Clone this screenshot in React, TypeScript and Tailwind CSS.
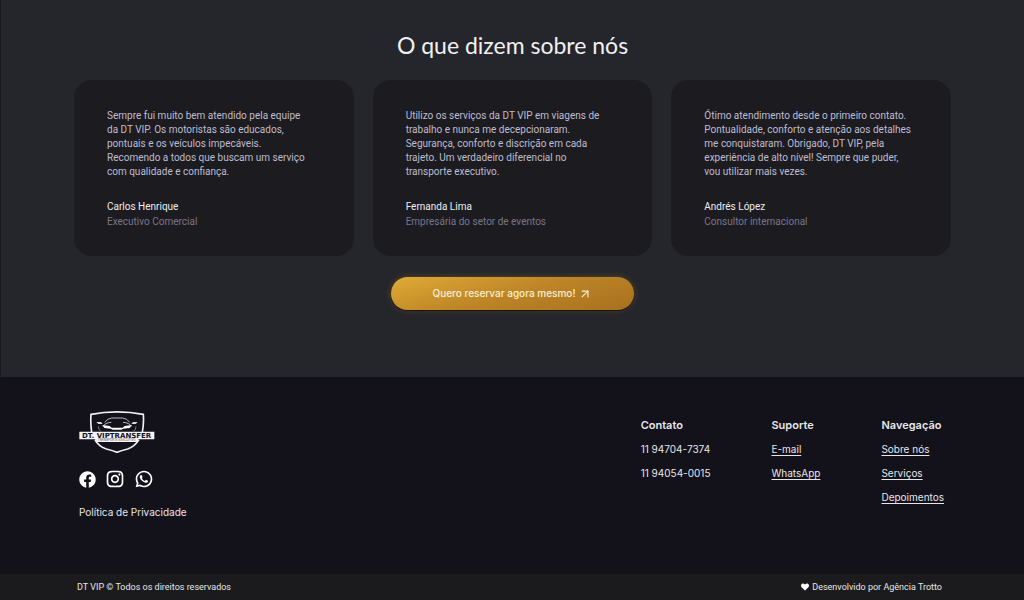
import { FaFacebook, FaHeart } from 'react-icons/fa'
import { FiArrowUpRight } from 'react-icons/fi'
import { RiInstagramLine, RiWhatsappLine } from 'react-icons/ri'

interface Testimonial {
  text: string
  name: string
  role: string
}

interface FooterLink {
  label: string
  href: string
}

const testimonials: Array<Testimonial> = [
  {
    text: 'Sempre fui muito bem atendido pela equipe\nda DT VIP. Os motoristas são educados,\npontuais e os veículos impecáveis.\nRecomendo a todos que buscam um serviço\ncom qualidade e confiança.',
    name: 'Carlos Henrique',
    role: 'Executivo Comercial',
  },
  {
    text: 'Utilizo os serviços da DT VIP em viagens de\ntrabalho e nunca me decepcionaram.\nSegurança, conforto e discrição em cada\ntrajeto. Um verdadeiro diferencial no\ntransporte executivo.',
    name: 'Fernanda Lima',
    role: 'Empresária do setor de eventos',
  },
  {
    text: 'Ótimo atendimento desde o primeiro contato.\nPontualidade, conforto e atenção aos detalhes\nme conquistaram. Obrigado, DT VIP, pela\nexperiência de alto nível! Sempre que puder,\nvou utilizar mais vezes.',
    name: 'Andrés López',
    role: 'Consultor internacional',
  },
]

const supportLinks: Array<FooterLink> = [
  { label: 'E-mail', href: '#email' },
  { label: 'WhatsApp', href: '#whatsapp' },
]

const navLinks: Array<FooterLink> = [
  { label: 'Sobre nós', href: '#sobre' },
  { label: 'Serviços', href: '#servicos' },
  { label: 'Depoimentos', href: '#depoimentos' },
]

function TestimonialCard({ text, name, role }: Testimonial) {
  return (
    <figure className="rounded-[18px] bg-[#1c1b1f] pt-[29px] pr-6 pb-[27px] pl-[33px] font-['Roboto',sans-serif] text-[10px]">
      <blockquote className="whitespace-pre-line leading-[14px] text-[#bfbdd3]">
        {text}
      </blockquote>
      <figcaption className="mt-5 leading-[15px]">
        <div className="text-[#eeedf2]">{name}</div>
        <div className="text-[#78768c]">{role}</div>
      </figcaption>
    </figure>
  )
}

function Logo() {
  return (
    <svg
      viewBox="56 32 228 126"
      className="h-[42px] w-[76px]"
      role="img"
      aria-label="DT. VIP Transfer"
    >
      {/* Shield */}
      <path
        d="M94 96Q90 70 92 42Q170 27 249 42Q251 70 246 96M104 118Q114 138 138 146Q158 151 170 156Q182 151 202 146Q224 138 236 118"
        fill="none"
        stroke="#f1f1f4"
        strokeWidth="5"
      />
      {/* Car */}
      <path
        d="M133 66Q142 54 154 53H187Q200 54 208 66M128 78Q134 67 153 66M213 78Q207 67 188 66"
        fill="none"
        stroke="#b9b8c0"
        strokeWidth="3"
      />
      <path d="M108 65h14l5 6h-13zM232 65h-14l-5 6h13z" fill="#d8d8de" />
      <path
        d="M126 74l22 3 6 5h33l6-5 22-3-7 9-19 2-6 3h-26l-6-3-19-2z"
        fill="#fff"
      />
      <path
        d="M114 78q0 10 7 15M227 78q0 10-7 15"
        fill="none"
        stroke="#777681"
        strokeWidth="3"
      />
      {/* Name plate */}
      <path d="M57 94H282V117H233V125H105V117H57Z" fill="#f4f4f6" />
      <text
        x="169"
        y="113"
        textAnchor="middle"
        fontSize="21"
        fontWeight="700"
        fill="#13111a"
        className="font-['DejaVu_Sans',sans-serif]"
      >
        DT. VIPTRANSFER
      </text>
      <text
        x="169"
        y="123"
        textAnchor="middle"
        fontSize="9"
        fill="#4a4954"
        className="font-['Inter',sans-serif]"
      >
        TRANSPORTE EXECUTIVO
      </text>
    </svg>
  )
}

function FooterLinks({
  title,
  links,
}: {
  title: string
  links: Array<FooterLink>
}) {
  return (
    <nav aria-label={title}>
      <h3 className="text-[11px] leading-4 font-semibold">{title}</h3>
      <ul className="mt-1 text-[10px] leading-6">
        {links.map((link) => (
          <li key={link.label}>
            <a href={link.href} className="underline underline-offset-2">
              {link.label}
            </a>
          </li>
        ))}
      </ul>
    </nav>
  )
}

export default function App() {
  return (
    <div className="min-h-screen bg-[#1b1b1d] font-['Inter',sans-serif] text-[#e6e6ea]">
      <section
        id="depoimentos"
        className="border-l border-[#191a1f] bg-[#25262b] px-8 pt-[29px] pb-[67px]"
      >
        <h2 className="text-center font-['Lato',sans-serif] text-[23px] leading-8 text-[#f0f0f2]">
          O que dizem sobre nós
        </h2>

        <div className="mx-auto mt-[19px] grid max-w-[877px] grid-cols-3 gap-[19px]">
          {testimonials.map((item) => (
            <TestimonialCard key={item.name} {...item} />
          ))}
        </div>

        <div className="mt-[21px] flex justify-center">
          <button
            type="button"
            className="flex items-center gap-[3px] rounded-full bg-linear-165 from-[#e0ac35] via-[#bd8527] to-[#a8701d] px-[42px] py-2 text-[10px] leading-[17px] font-medium text-[#fbeed2] shadow-[0_1px_1px_#191309,0_0_6px_#a8792a66]"
          >
            Quero reservar agora mesmo!
            <FiArrowUpRight className="size-[14px]" />
          </button>
        </div>
      </section>

      <footer>
        <div className="bg-[#13111a] px-8 pt-[34px] pb-[54px]">
          <div className="mx-auto flex max-w-[866px] justify-between pr-px">
            <div>
              <Logo />
              <div className="mt-4 flex items-center gap-[9px] text-white">
                <a href="#facebook" aria-label="Facebook">
                  <FaFacebook className="size-[17px]" />
                </a>
                <a href="#instagram" aria-label="Instagram">
                  <RiInstagramLine className="size-5" />
                </a>
                <a href="#whatsapp" aria-label="WhatsApp">
                  <RiWhatsappLine className="size-5" />
                </a>
              </div>
              <a
                href="#privacidade"
                className="mt-[15px] block text-[10px] leading-4"
              >
                Política de Privacidade
              </a>
            </div>

            <div className="flex gap-[61px] pt-[6px]">
              <div>
                <h3 className="text-[11px] leading-4 font-semibold">Contato</h3>
                <ul className="mt-1 text-[10px] leading-6">
                  <li>11 94704-7374</li>
                  <li>11 94054-0015</li>
                </ul>
              </div>
              <FooterLinks title="Suporte" links={supportLinks} />
              <FooterLinks title="Navegação" links={navLinks} />
            </div>
          </div>
        </div>

        <div className="px-8 py-[6px]">
          <div className="mx-auto flex max-w-[870px] justify-between pr-[5px] font-['Roboto',sans-serif] text-[9px] leading-[14px]">
            <p>DT VIP © Todos os direitos reservados</p>
            <p className="flex items-center gap-[3px]">
              <FaHeart className="size-2 text-white" />
              Desenvolvido por Agência Trotto
            </p>
          </div>
        </div>
      </footer>
    </div>
  )
}
